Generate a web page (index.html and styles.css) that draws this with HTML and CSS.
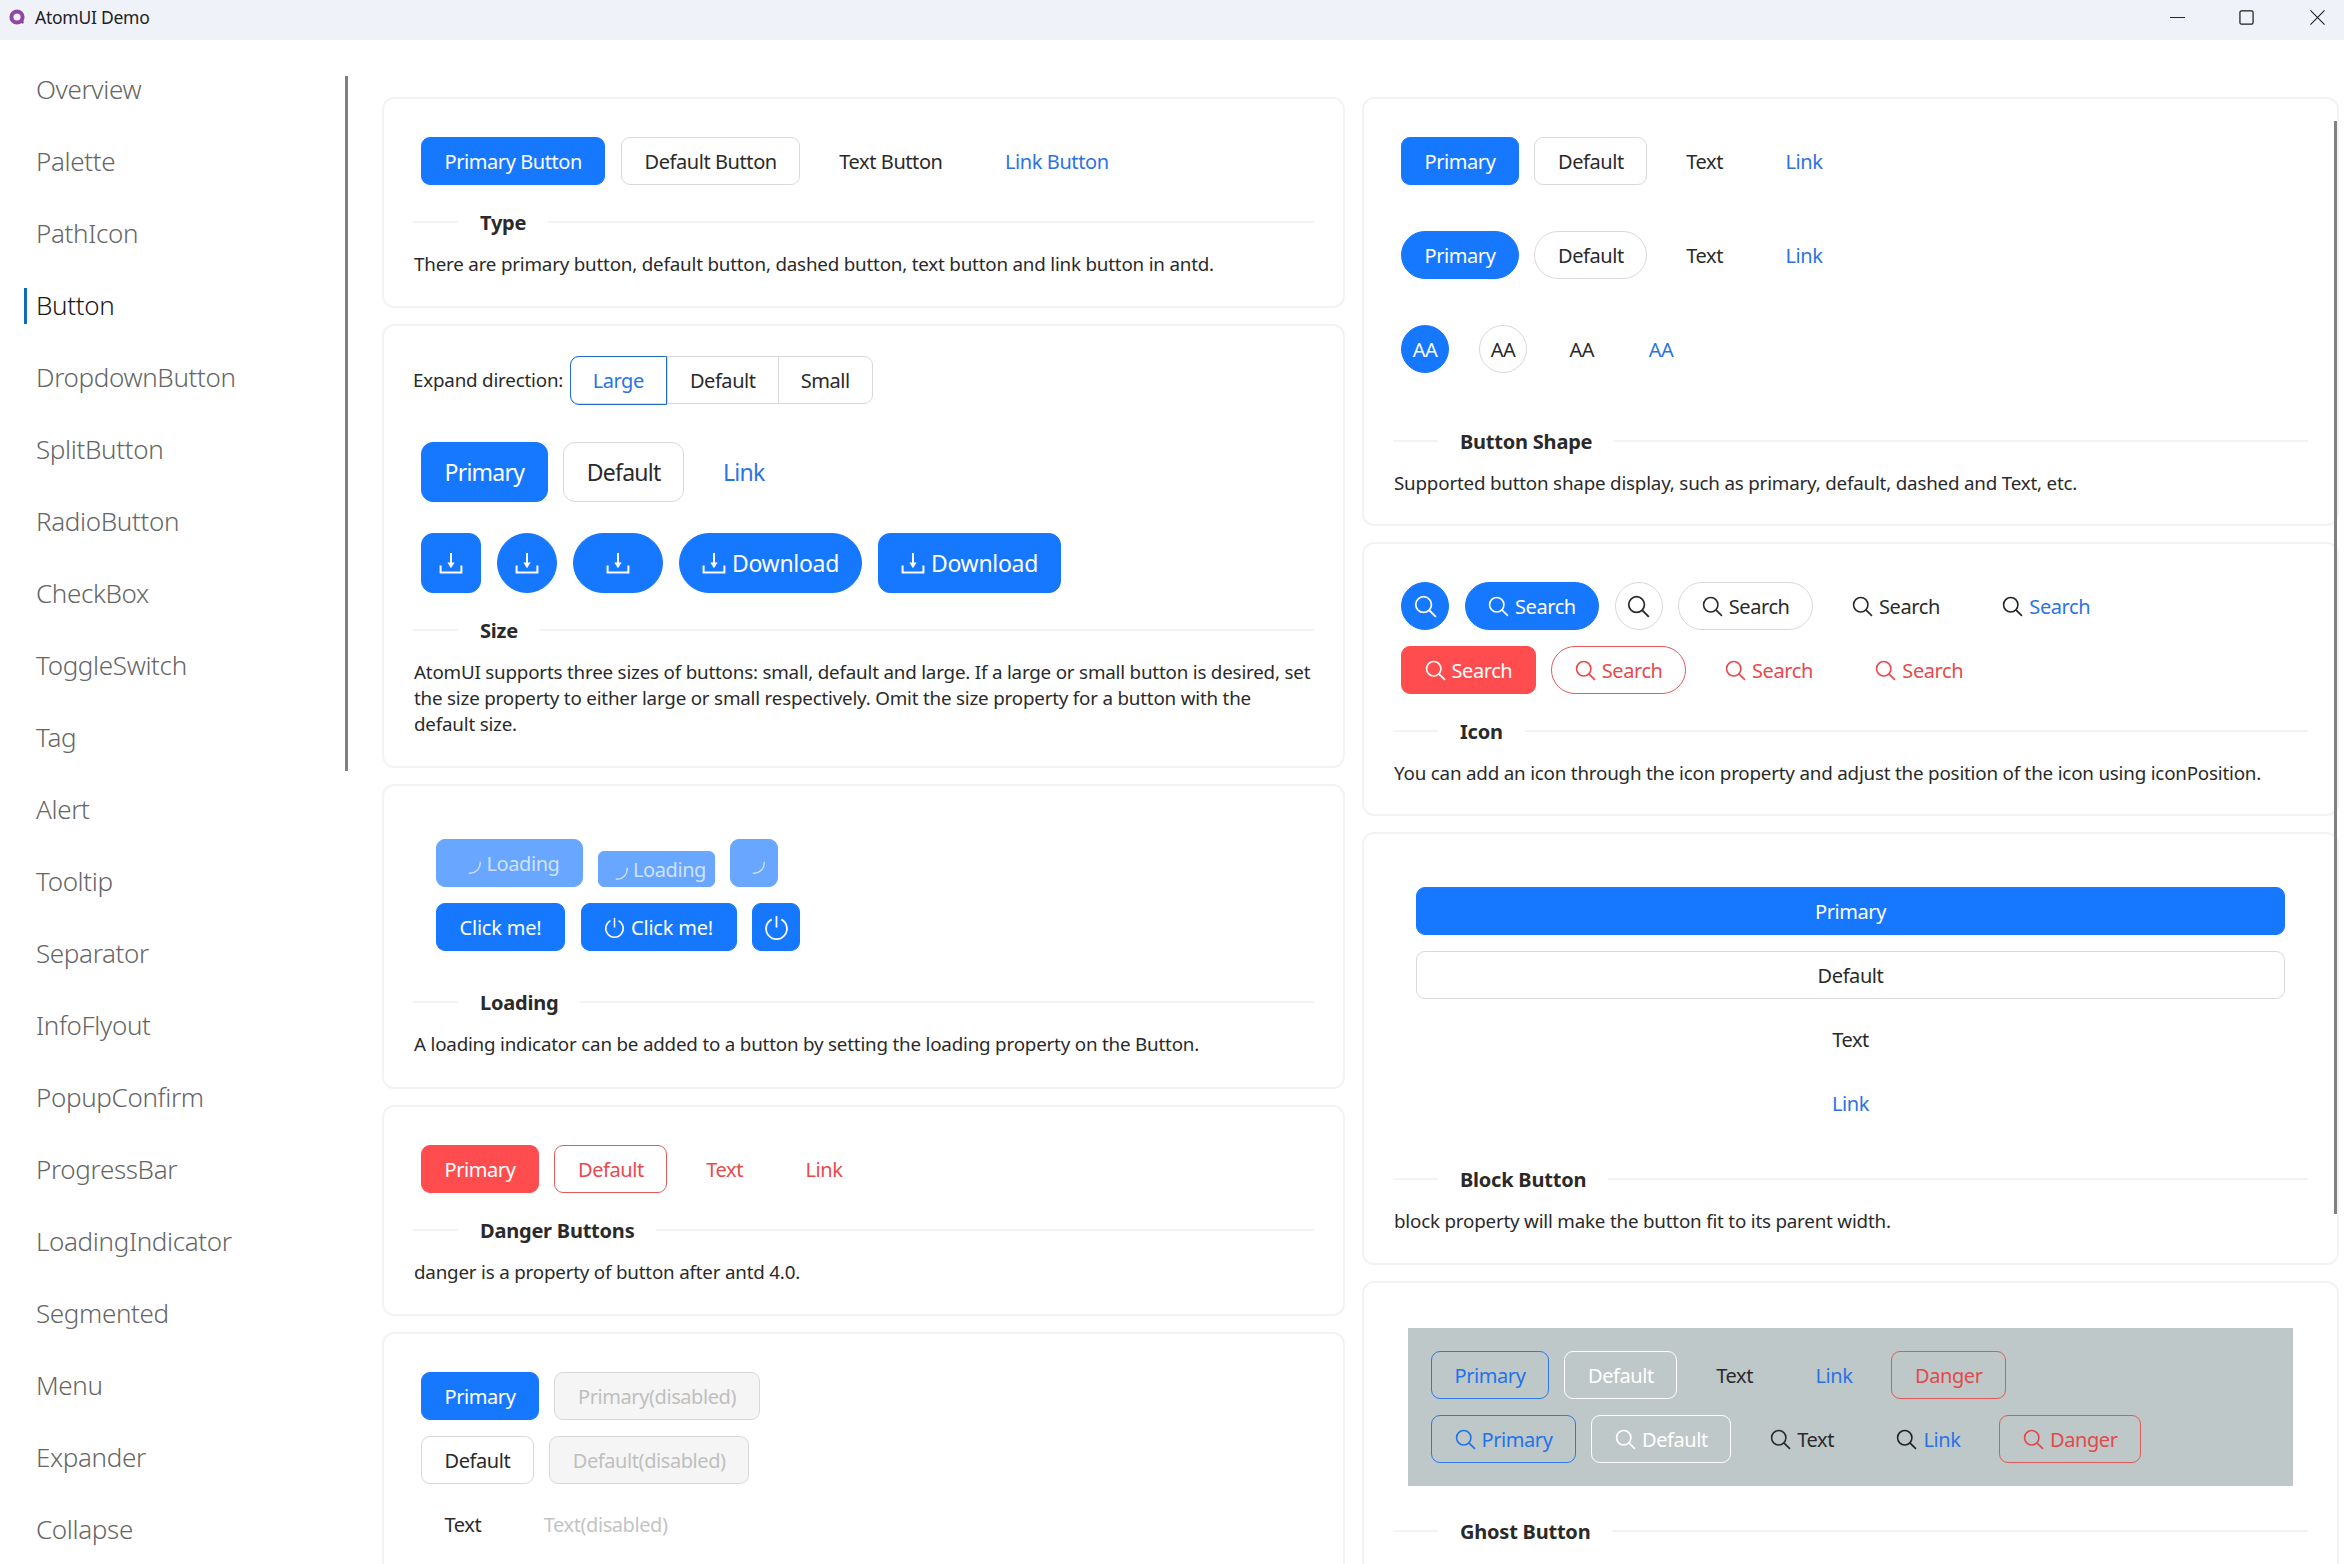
FILE: index.html
```html
<!DOCTYPE html>
<html lang="en">
<head>
    <meta charset="UTF-8">
    <title>AtomUI Demo</title>
    <link rel="stylesheet" href="styles.css">
</head>
<body>

<svg class="defs" width="0" height="0">
    <symbol id="i-search" viewBox="0 0 24 24">
        <circle cx="10" cy="10" r="8.2" fill="none" stroke="currentColor" stroke-width="1.8"/>
        <path d="M15.9 15.9L22.8 22.8" fill="none" stroke="currentColor" stroke-width="1.9"/>
    </symbol>
    <symbol id="i-download" viewBox="0 0 24 24">
        <path d="M12 2V14M1.6 14.5V21.4H22.4V14.5" fill="none" stroke="currentColor" stroke-width="2"/>
        <path d="M8.4 11.6H15.6L12 17.2Z" fill="currentColor"/>
    </symbol>
    <symbol id="i-power" viewBox="0 0 24 24">
        <path d="M7.4 4.2A10 10 0 1 0 16.6 4.2" fill="none" stroke="currentColor" stroke-width="1.7"/>
        <path d="M12 1V12" fill="none" stroke="currentColor" stroke-width="1.7"/>
    </symbol>
    <symbol id="i-spin" viewBox="0 0 24 24">
        <path d="M23 10A11.5 11.5 0 0 1 10 23" fill="none" stroke="currentColor" stroke-width="1.6"/>
    </symbol>
</svg>

<header class="titlebar">
    <svg class="logo" viewBox="0 0 20 20">
        <circle cx="10" cy="10" r="9.8" fill="#f7f4f9"/>
        <circle cx="10" cy="10" r="5.6" fill="#f4eff7" stroke="#8b48a6" stroke-width="4"/>
        <path d="M13.5 13.5L16.4 16" stroke="#8b48a6" stroke-width="2.4"/>
    </svg>
    <span class="app-name">AtomUI Demo</span>
    <div class="win-controls">
        <svg class="win-btn" viewBox="0 0 16 16"><path d="M0 8H16" stroke="#1a1a1a" stroke-width="1"/></svg>
        <svg class="win-btn" viewBox="0 0 16 16"><rect x="1" y="1" width="14" height="14" rx="1.5" fill="none" stroke="#1a1a1a" stroke-width="1.3"/></svg>
        <svg class="win-btn" viewBox="0 0 16 16"><path d="M0.5 0.5L15.5 15.5M15.5 0.5L0.5 15.5" stroke="#1a1a1a" stroke-width="1.1"/></svg>
    </div>
</header>

<div class="app">
    <nav class="sidebar">
        <a class="nav-item">Overview</a>
        <a class="nav-item">Palette</a>
        <a class="nav-item">PathIcon</a>
        <a class="nav-item active">Button</a>
        <a class="nav-item">DropdownButton</a>
        <a class="nav-item">SplitButton</a>
        <a class="nav-item">RadioButton</a>
        <a class="nav-item">CheckBox</a>
        <a class="nav-item">ToggleSwitch</a>
        <a class="nav-item">Tag</a>
        <a class="nav-item">Alert</a>
        <a class="nav-item">Tooltip</a>
        <a class="nav-item">Separator</a>
        <a class="nav-item">InfoFlyout</a>
        <a class="nav-item">PopupConfirm</a>
        <a class="nav-item">ProgressBar</a>
        <a class="nav-item">LoadingIndicator</a>
        <a class="nav-item">Segmented</a>
        <a class="nav-item">Menu</a>
        <a class="nav-item">Expander</a>
        <a class="nav-item">Collapse</a>
        <div class="side-scroll"></div>
    </nav>

    <main class="content">
        <div class="column col-left">
            <section class="card card-type">
                <div class="row">
                    <button class="btn primary">Primary Button</button>
                    <button class="btn">Default Button</button>
                    <button class="btn text">Text Button</button>
                    <button class="btn link">Link Button</button>
                </div>
                <div class="divider"><span>Type</span></div>
                <p class="desc">There are primary button, default button, dashed button, text button and link button in antd.</p>
            </section>

            <section class="card card-size">
                <div class="expand">
                    <span class="expand-label">Expand direction:</span>
                    <div class="segmented">
                        <span class="seg on">Large</span>
                        <span class="seg">Default</span>
                        <span class="seg">Small</span>
                    </div>
                </div>
                <div class="row row-large">
                    <button class="btn lg primary">Primary</button>
                    <button class="btn lg">Default</button>
                    <button class="btn lg link">Link</button>
                </div>
                <div class="row row-download">
                    <button class="btn lg primary square"><svg class="ic ic-dl"><use href="#i-download"/></svg></button>
                    <button class="btn lg primary square pill"><svg class="ic ic-dl"><use href="#i-download"/></svg></button>
                    <button class="btn lg primary pill wide"><svg class="ic ic-dl"><use href="#i-download"/></svg></button>
                    <button class="btn lg primary pill dl"><svg class="ic ic-dl"><use href="#i-download"/></svg>Download</button>
                    <button class="btn lg primary dl"><svg class="ic ic-dl"><use href="#i-download"/></svg>Download</button>
                </div>
                <div class="divider"><span>Size</span></div>
                <p class="desc">AtomUI supports three sizes of buttons: small, default and large. If a large or small button is desired, set the size property to either large or small respectively. Omit the size property for a button with the default size.</p>
            </section>

            <section class="card card-loading">
                <div class="row row-loading">
                    <button class="btn primary loading"><svg class="ic spin"><use href="#i-spin"/></svg>Loading</button>
                    <button class="btn primary loading sm"><svg class="ic spin"><use href="#i-spin"/></svg>Loading</button>
                    <button class="btn primary loading only"><svg class="ic spin"><use href="#i-spin"/></svg></button>
                </div>
                <div class="row row-click">
                    <button class="btn primary">Click me!</button>
                    <button class="btn primary"><svg class="ic power"><use href="#i-power"/></svg>Click me!</button>
                    <button class="btn primary only"><svg class="ic power-lg"><use href="#i-power"/></svg></button>
                </div>
                <div class="divider"><span>Loading</span></div>
                <p class="desc">A loading indicator can be added to a button by setting the loading property on the Button.</p>
            </section>

            <section class="card card-danger">
                <div class="row">
                    <button class="btn primary danger">Primary</button>
                    <button class="btn danger-line">Default</button>
                    <button class="btn text danger-text">Text</button>
                    <button class="btn link danger-text">Link</button>
                </div>
                <div class="divider"><span>Danger Buttons</span></div>
                <p class="desc">danger is a property of button after antd 4.0.</p>
            </section>

            <section class="card card-disabled">
                <div class="row">
                    <button class="btn primary">Primary</button>
                    <button class="btn disabled">Primary(disabled)</button>
                </div>
                <div class="row row-next">
                    <button class="btn">Default</button>
                    <button class="btn disabled">Default(disabled)</button>
                </div>
                <div class="row row-next">
                    <button class="btn text">Text</button>
                    <button class="btn text text-disabled">Text(disabled)</button>
                </div>
            </section>
        </div>

        <div class="column col-right">
            <section class="card card-shape">
                <div class="row">
                    <button class="btn primary">Primary</button>
                    <button class="btn">Default</button>
                    <button class="btn text">Text</button>
                    <button class="btn link">Link</button>
                </div>
                <div class="row row-shape">
                    <button class="btn primary pill">Primary</button>
                    <button class="btn pill">Default</button>
                    <button class="btn text">Text</button>
                    <button class="btn link">Link</button>
                </div>
                <div class="row row-shape">
                    <button class="btn primary circle">AA</button>
                    <button class="btn circle aa-outline">AA</button>
                    <button class="btn text aa-text">AA</button>
                    <button class="btn link aa-link">AA</button>
                </div>
                <div class="divider"><span>Button Shape</span></div>
                <p class="desc">Supported button shape display, such as primary, default, dashed and Text, etc.</p>
            </section>

            <section class="card card-icon">
                <div class="row">
                    <button class="btn primary circle"><svg class="ic search-lg"><use href="#i-search"/></svg></button>
                    <button class="btn primary pill"><svg class="ic"><use href="#i-search"/></svg>Search</button>
                    <button class="btn circle"><svg class="ic search-lg"><use href="#i-search"/></svg></button>
                    <button class="btn pill"><svg class="ic"><use href="#i-search"/></svg>Search</button>
                    <button class="btn text"><svg class="ic"><use href="#i-search"/></svg>Search</button>
                    <button class="btn link"><svg class="ic ic-dark"><use href="#i-search"/></svg>Search</button>
                </div>
                <div class="row row-next">
                    <button class="btn primary danger"><svg class="ic"><use href="#i-search"/></svg>Search</button>
                    <button class="btn danger-line pill"><svg class="ic"><use href="#i-search"/></svg>Search</button>
                    <button class="btn text danger-text"><svg class="ic"><use href="#i-search"/></svg>Search</button>
                    <button class="btn link danger-text"><svg class="ic"><use href="#i-search"/></svg>Search</button>
                </div>
                <div class="divider"><span>Icon</span></div>
                <p class="desc">You can add an icon through the icon property and adjust the position of the icon using iconPosition.</p>
            </section>

            <section class="card card-block">
                <div class="block-list">
                    <button class="btn primary">Primary</button>
                    <button class="btn">Default</button>
                    <button class="btn text">Text</button>
                    <button class="btn link">Link</button>
                </div>
                <div class="divider"><span>Block Button</span></div>
                <p class="desc">block property will make the button fit to its parent width.</p>
            </section>

            <section class="card card-ghost">
                <div class="ghost-panel">
                    <div class="row">
                        <button class="btn ghost ghost-blue">Primary</button>
                        <button class="btn ghost">Default</button>
                        <button class="btn text">Text</button>
                        <button class="btn link">Link</button>
                        <button class="btn ghost ghost-red">Danger</button>
                    </div>
                    <div class="row row-next">
                        <button class="btn ghost ghost-blue"><svg class="ic"><use href="#i-search"/></svg>Primary</button>
                        <button class="btn ghost"><svg class="ic"><use href="#i-search"/></svg>Default</button>
                        <button class="btn text"><svg class="ic"><use href="#i-search"/></svg>Text</button>
                        <button class="btn link"><svg class="ic ic-dark"><use href="#i-search"/></svg>Link</button>
                        <button class="btn ghost ghost-red"><svg class="ic"><use href="#i-search"/></svg>Danger</button>
                    </div>
                </div>
                <div class="divider"><span>Ghost Button</span></div>
            </section>
        </div>

        <div class="main-scroll"></div>
    </main>
</div>

</body>
</html>
```

FILE: styles.css
```css
* { margin: 0; padding: 0; box-sizing: border-box; }
html, body { height: 100%; overflow: hidden; }
body { font-family: 'Noto Sans', sans-serif; font-size: 20px; letter-spacing: -0.42px; background: #fff; color: #2a2a2a; }
.defs { position: absolute; }

/* window chrome */
.titlebar { height: 40px; background: #eff3f9; display: flex; align-items: center; padding: 0 0 6px 7px; }
.logo { width: 20px; height: 20px; }
.app-name { margin-left: 8px; font-size: 17.5px; letter-spacing: -0.25px; color: #222; }
.win-controls { margin-left: auto; display: flex; align-items: center; }
.win-btn { width: 15px; height: 15px; margin-right: 54px; }
.win-btn:nth-child(2) { margin-right: 56px; }
.win-btn:last-child { margin-right: 19px; }

.app { display: flex; height: 1524px; overflow: hidden; }

/* sidebar */
.sidebar { width: 382px; flex: none; position: relative; padding-top: 12.5px; }
.nav-item { display: block; position: relative; height: 72px; line-height: 72px; padding-left: 36px; font-size: 26px; font-weight: 300; letter-spacing: -0.35px; color: #666; }
.nav-item.active { color: #1a1a1a; }
.nav-item.active::before { content: ''; position: absolute; left: 24px; top: 19px; width: 3px; height: 36px; background: #0f6cbd; }
.side-scroll { position: absolute; left: 345px; top: 36px; width: 3px; height: 695px; background: #808080; }

/* content */
.content { flex: 1; display: flex; gap: 17px; padding-top: 57px; position: relative; min-width: 0; }
.column { display: flex; flex-direction: column; gap: 16px; }
.col-left { width: 963px; flex: none; }
.col-right { width: 977px; flex: none; }
.main-scroll { position: absolute; right: 7px; top: 81px; width: 3px; height: 1093px; background: #808080; }

.card { border: 2px solid #f3f3f3; border-radius: 12px; padding: 38px 29px 0; flex: none; }
.card-type { height: 211px; }
.card-size { height: 444px; padding-top: 30px; }
.card-loading { height: 305px; padding-top: 53px; }
.card-danger { height: 211px; }
.card-disabled { height: 300px; }
.card-shape { height: 429px; }
.card-icon { height: 274px; }
.card-block { height: 433px; padding-top: 53px; }
.card-ghost { height: 300px; padding-top: 45px; }

.row { display: flex; gap: 15.5px; padding-left: 8px; align-items: flex-end; }
.row-next { margin-top: 16px; }
.row-shape { margin-top: 46px; }
.row-large { margin-top: 38px; }
.row-large .btn.lg { letter-spacing: -0.75px; }
.row-download { margin-top: 31px; gap: 16px; }
.row-loading { padding-left: 23px; }
.row-click { padding-left: 23px; margin-top: 16px; letter-spacing: -0.2px; }

/* buttons */
.btn {
    font: inherit; letter-spacing: inherit; height: 48px; padding: 0 22.5px; border: 1.5px solid #d9d9d9; border-radius: 9px;
    background: #fff; color: #2a2a2a; display: inline-flex; align-items: center; justify-content: center;
    gap: 6px; white-space: nowrap;
}
.btn.primary { background: #1677ff; border-color: #1677ff; color: #fff; }
.btn.text, .btn.link { border-color: transparent; background: transparent; }
.btn.link { color: #2b72e6; }
.btn.lg { height: 60px; font-size: 23px; letter-spacing: -0.3px; border-radius: 12px; }
.btn.lg.square { width: 60px; padding: 0; }
.btn.pill { border-radius: 30px; }
.btn.wide { width: 90px; padding: 0; }
.btn.dl { width: 183px; padding: 0; }
.btn.circle { width: 48px; padding: 0; border-radius: 50%; }
.aa-outline { margin-left: 14.5px; }
.btn.aa-text { padding: 0 26px; }
.btn.aa-link { padding: 0 11px; }
.btn.only { width: 48px; padding: 0; }
.btn.sm { height: 36px; border-radius: 6px; padding: 0 8px; gap: 4.5px; }

.btn.loading { background: #69a6ff; border-color: #69a6ff; color: #cfe2ff; }
.btn.danger { background: #ff4d4f; border-color: #ff4d4f; }
.btn.danger-line { border-color: #e45a5c; color: #e9494b; }
.btn.danger-text { color: #e9494b; }
.btn.disabled { background: #f5f5f5; color: #bfbfbf; }
.btn.text-disabled { color: #c4c4c4; }

.btn.ghost { background: transparent; border-color: #fff; color: #fff; }
.btn.ghost-blue { border-color: #2f7ae5; color: #1f73ea; }
.btn.ghost-red { border-color: #e05a5c; color: #e3494b; }

.ic { width: 21px; height: 21px; flex: none; }
.ic-dark { color: #222; }
.ic-dl { width: 24px; height: 24px; }
.search-lg { width: 23px; height: 23px; }
.power { width: 21px; height: 21px; }
.power-lg { width: 25px; height: 25px; }
.spin { width: 21px; height: 21px; }

/* divider + description */
.divider { display: flex; align-items: center; margin-top: 22px; font-weight: 700; letter-spacing: -0.22px; height: 30px; }
.divider::before { content: ''; width: 45px; height: 2px; background: #f3f3f3; }
.divider::after { content: ''; flex: 1; height: 2px; background: #f3f3f3; }
.divider span { padding: 0 22px; }
.card-shape .divider { margin-top: 53px; }
.card-loading .divider { margin-top: 36px; }
.card-block .divider { margin-top: 37px; }
.card-ghost .divider { margin-top: 30px; }
.desc { margin-top: 14px; font-size: 18.8px; letter-spacing: -0.2px; line-height: 26px; padding-left: 1px; }
.card-size .desc { max-width: 899px; }

/* expand */
.expand { display: flex; align-items: center; }
.expand-label { margin-right: 7px; font-size: 18.8px; letter-spacing: -0.2px; }
.segmented { display: flex; height: 48px; border: 1.5px solid #d9d9d9; border-radius: 9px; }
.seg { display: flex; align-items: center; padding: 0 22px; border-left: 1.5px solid #d9d9d9; }
.seg:first-child { border-left: 0; }
.seg.on { color: #2b72e6; border: 1.5px solid #1f6fc4; margin: -1.5px 0 -1.5px -1.5px; border-radius: 9px 0 0 9px; }

/* block */
.block-list { display: flex; flex-direction: column; gap: 16px; padding: 0 23px; }
.block-list .btn { width: 100%; }

/* ghost */
.ghost-panel { background: #bec8c8; margin: 0 15px; padding: 23px; height: 158px; }
.ghost-panel .row { padding-left: 0; }
```
